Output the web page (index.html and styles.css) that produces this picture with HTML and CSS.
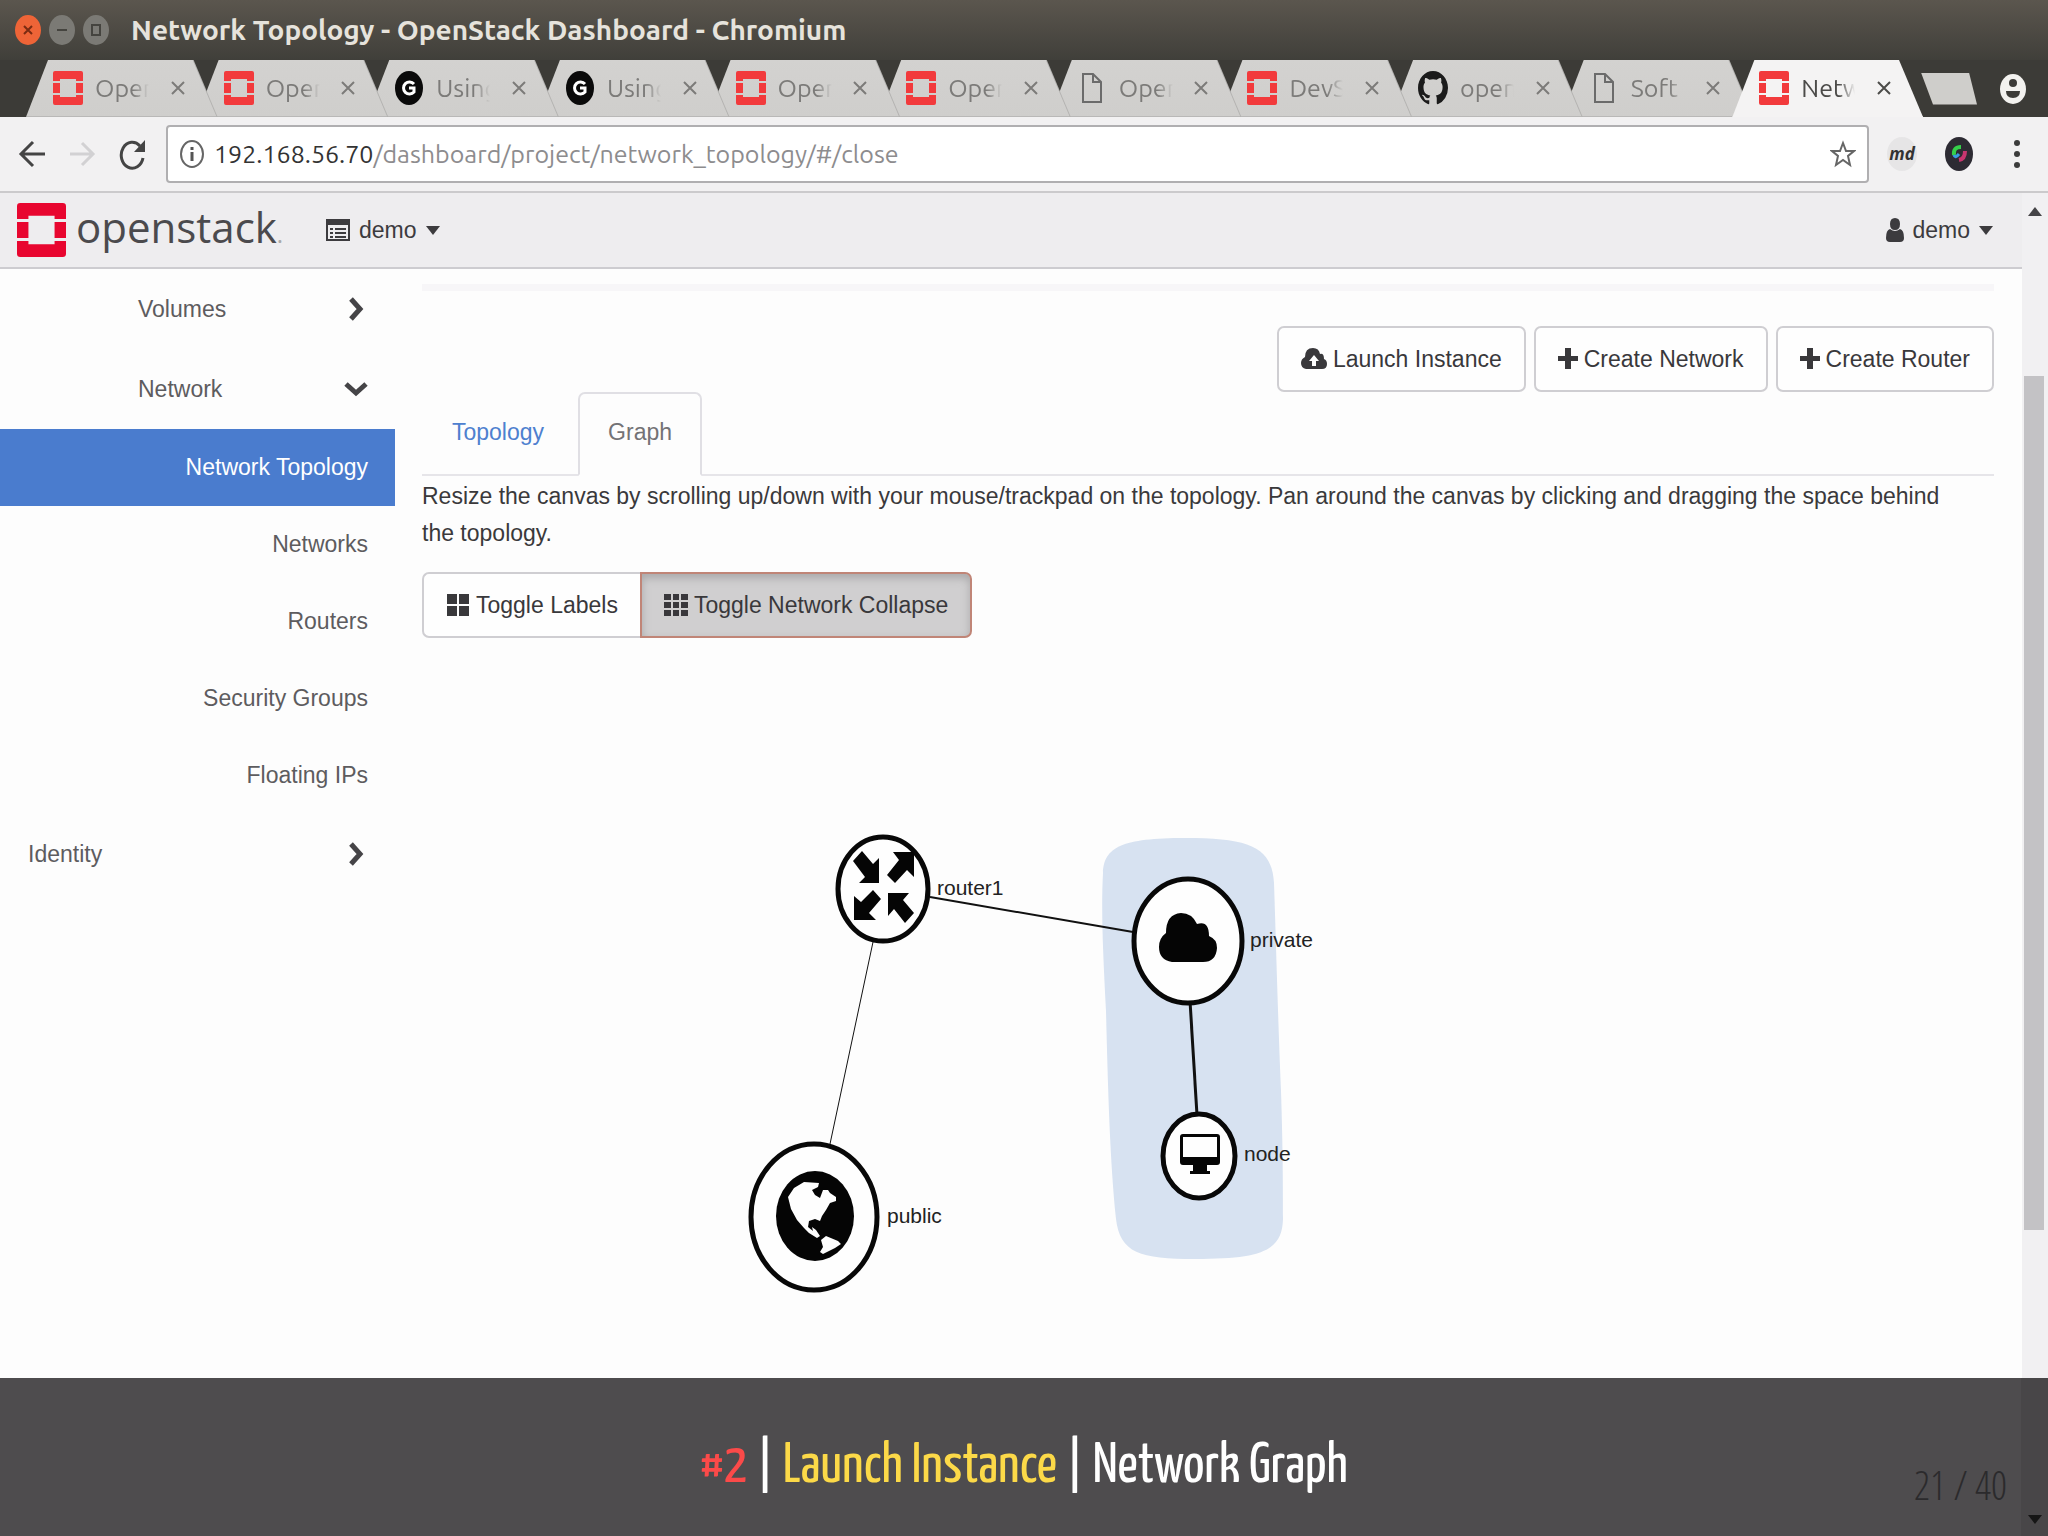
FILE: index.html
```html
<!DOCTYPE html>
<html lang="en">
<head>
<meta charset="utf-8">
<title>Network Topology - OpenStack Dashboard</title>
<link rel="stylesheet" href="styles.css">
</head>
<body>
<svg class="defs" aria-hidden="true">
  <symbol id="stack" viewBox="0 0 30 34" preserveAspectRatio="none">
    <path d="M2 0H28Q30 0 30 2V10H23V8H7V10H0V2Q0 0 2 0ZM0 12H7V22H0ZM23 12H30V22H23ZM0 24H7V26H23V24H30V32Q30 34 28 34H2Q0 34 0 32Z"/>
  </symbol>
  <symbol id="gee" viewBox="0 0 30 34" preserveAspectRatio="none">
    <ellipse cx="15" cy="17" rx="14" ry="17" fill="#0a0a0a"/>
    <path d="M20 13A6 6 0 1 0 20 21V17H15" fill="none" stroke="#fff" stroke-width="3"/>
  </symbol>
  <symbol id="page" viewBox="0 0 30 34" preserveAspectRatio="none">
    <path d="M6 3H16L24 11V31H6ZM16 3V11H24" fill="none" stroke="#6b6b6b" stroke-width="2"/>
  </symbol>
  <symbol id="octocat" viewBox="0 0 16 16" preserveAspectRatio="none">
    <path fill="#1b1b1b" d="M8 0C3.58 0 0 3.58 0 8c0 3.54 2.29 6.53 5.47 7.59.4.07.55-.17.55-.38 0-.19-.01-.82-.01-1.49-2.01.37-2.53-.49-2.69-.94-.09-.23-.48-.94-.82-1.13-.28-.15-.68-.52-.01-.53.63-.01 1.08.58 1.23.82.72 1.21 1.87.87 2.33.66.07-.52.28-.87.51-1.07-1.78-.2-3.64-.89-3.64-3.95 0-.87.31-1.59.82-2.15-.08-.2-.36-1.02.08-2.12 0 0 .67-.21 2.2.82.64-.18 1.32-.27 2-.27s1.36.09 2 .27c1.53-1.04 2.2-.82 2.2-.82.44 1.1.16 1.92.08 2.12.51.56.82 1.27.82 2.15 0 3.07-1.87 3.75-3.65 3.95.29.25.54.73.54 1.48 0 1.07-.01 1.93-.01 2.2 0 .21.15.46.55.38A8.01 8.01 0 0 0 16 8c0-4.42-3.58-8-8-8Z"/>
  </symbol>
  <symbol id="cross" viewBox="0 0 16 18"><path d="M2 3L14 15M14 3L2 15" fill="none" stroke="currentColor" stroke-width="2"/></symbol>
  <symbol id="caret" viewBox="0 0 14 9"><path d="M0 0H14L7 9Z" fill="currentColor"/></symbol>
  <symbol id="plus" viewBox="0 0 20 24"><path d="M7 1H13V9H20V14H13V22H7V14H0V9H7Z" fill="currentColor"/></symbol>
  <symbol id="chev" viewBox="0 0 16 24"><path d="M3 2L12 12L3 22" fill="none" stroke="currentColor" stroke-width="5"/></symbol>
</svg>

<header class="titlebar">
  <div class="controls">
    <button class="ctl ctl-close" aria-label="Close"><svg viewBox="0 0 26 30"><path d="M9 11L17 19M17 11L9 19"/></svg></button>
    <button class="ctl" aria-label="Minimize"><svg viewBox="0 0 26 30"><path d="M8 15H18"/></svg></button>
    <button class="ctl" aria-label="Maximize"><svg viewBox="0 0 26 30"><path d="M9 10H17V20H9Z"/></svg></button>
  </div>
  <span class="window-title">Network Topology - OpenStack Dashboard - Chromium</span>
</header>

<nav class="tabstrip" aria-label="Browser tabs">
  <div class="tabs">
    <div class="tab"><div class="tab-in"><svg class="fav"><use href="#stack"/></svg><span class="tab-t">Open</span><svg class="x"><use href="#cross"/></svg></div></div>
    <div class="tab"><div class="tab-in"><svg class="fav"><use href="#stack"/></svg><span class="tab-t">Open</span><svg class="x"><use href="#cross"/></svg></div></div>
    <div class="tab"><div class="tab-in"><svg class="fav"><use href="#gee"/></svg><span class="tab-t">Using</span><svg class="x"><use href="#cross"/></svg></div></div>
    <div class="tab"><div class="tab-in"><svg class="fav"><use href="#gee"/></svg><span class="tab-t">Using</span><svg class="x"><use href="#cross"/></svg></div></div>
    <div class="tab"><div class="tab-in"><svg class="fav"><use href="#stack"/></svg><span class="tab-t">Open</span><svg class="x"><use href="#cross"/></svg></div></div>
    <div class="tab"><div class="tab-in"><svg class="fav"><use href="#stack"/></svg><span class="tab-t">Open</span><svg class="x"><use href="#cross"/></svg></div></div>
    <div class="tab"><div class="tab-in"><svg class="fav"><use href="#page"/></svg><span class="tab-t">Open</span><svg class="x"><use href="#cross"/></svg></div></div>
    <div class="tab"><div class="tab-in"><svg class="fav"><use href="#stack"/></svg><span class="tab-t">DevS</span><svg class="x"><use href="#cross"/></svg></div></div>
    <div class="tab"><div class="tab-in"><svg class="fav"><use href="#octocat"/></svg><span class="tab-t">open</span><svg class="x"><use href="#cross"/></svg></div></div>
    <div class="tab"><div class="tab-in"><svg class="fav"><use href="#page"/></svg><span class="tab-t">Soft</span><svg class="x"><use href="#cross"/></svg></div></div>
    <div class="tab current"><div class="tab-in"><svg class="fav"><use href="#stack"/></svg><span class="tab-t">Netw</span><svg class="x"><use href="#cross"/></svg></div></div>
  </div>
  <button class="newtab" aria-label="New tab"></button>
  <button class="profile" aria-label="Profile"><svg viewBox="0 0 26 30"><ellipse cx="13" cy="15" rx="13" ry="15" fill="#f3f2ef"/><ellipse cx="13" cy="9" rx="4" ry="4" fill="#3c3b37"/><path d="M6 17H20Q20 24 13 24Q6 24 6 17Z" fill="#3c3b37"/></svg></button>
</nav>

<div class="toolbar">
  <button class="tool" aria-label="Back"><svg viewBox="0 0 28 32"><path d="M27 16H4M15 4L3 16L15 28" fill="none" stroke="#444" stroke-width="3"/></svg></button>
  <button class="tool" aria-label="Forward"><svg viewBox="0 0 28 32"><path d="M2 16H24M14 5L25 16L14 27" fill="none" stroke="#d2d1d3" stroke-width="3"/></svg></button>
  <button class="tool" aria-label="Reload"><svg viewBox="0 0 28 32"><path d="M25 20A11 13 0 1 1 22 8" fill="none" stroke="#444" stroke-width="3"/><path d="M27 2V14H16Z" fill="#444"/></svg></button>
  <div class="address">
    <svg class="info" viewBox="0 0 26 30"><ellipse cx="13" cy="15" rx="11" ry="13" fill="none" stroke="#666" stroke-width="2"/><path d="M13 13V22M13 8V11" stroke="#555" stroke-width="3"/></svg>
    <span class="url"><b>192.168.56.70</b>/dashboard/project/network_topology/#/close</span>
    <svg class="star" viewBox="0 0 26 28"><path d="M13 3L16 11L24 11L18 16L20 25L13 20L6 25L8 16L2 11L10 11Z" fill="none" stroke="#666" stroke-width="2"/></svg>
  </div>
  <span class="md">md</span>
  <svg class="lens" viewBox="0 0 28 34"><ellipse cx="14" cy="17" rx="14" ry="17" fill="#2d2b33"/><path d="M9 18Q8 10 16 10" fill="none" stroke="#35d04a" stroke-width="4"/><path d="M9 18Q10 22 14 17" fill="none" stroke="#3a9be0" stroke-width="3"/><path d="M20 14Q20 22 14 23" fill="none" stroke="#c8356f" stroke-width="4"/></svg>
  <button class="menu" aria-label="Menu"><svg viewBox="0 0 8 30"><circle cx="4" cy="4" r="3"/><circle cx="4" cy="15" r="3"/><circle cx="4" cy="26" r="3"/></svg></button>
</div>

<div class="viewport">
  <div class="site">
    <header class="site-head">
      <a class="brand" href="#"><svg class="brand-mark"><use href="#stack"/></svg><span>openstack<small>.</small></span></a>
      <button class="drop"><svg class="i-list" viewBox="0 0 24 22"><path d="M1 1H23V21H1Z" fill="none" stroke="currentColor" stroke-width="2"/><path d="M0 0H24V6H0ZM4 9H7V11H4ZM9 9H20V11H9ZM4 13H7V15H4ZM9 13H20V15H9ZM4 17H7V19H4ZM9 17H20V19H9Z" fill="currentColor"/></svg>demo<svg class="caret"><use href="#caret"/></svg></button>
      <button class="drop user"><svg class="i-user" viewBox="0 0 18 24"><path d="M9 0Q14 0 14 6Q14 12 9 12Q4 12 4 6Q4 0 9 0ZM4 11Q9 15 14 11Q18 12 18 20Q18 24 14 24H4Q0 24 0 20Q0 12 4 11Z" fill="currentColor"/></svg>demo<svg class="caret"><use href="#caret"/></svg></button>
    </header>
    <div class="columns">
      <nav class="sidebar" aria-label="Project">
        <a class="group sub" href="#"><span>Volumes</span><svg class="chev"><use href="#chev"/></svg></a>
        <a class="group sub" href="#"><span>Network</span><svg class="chev open"><use href="#chev"/></svg></a>
        <a class="leaf here" href="#">Network Topology</a>
        <a class="leaf" href="#">Networks</a>
        <a class="leaf" href="#">Routers</a>
        <a class="leaf" href="#">Security Groups</a>
        <a class="leaf" href="#">Floating IPs</a>
        <a class="group" href="#"><span>Identity</span><svg class="chev"><use href="#chev"/></svg></a>
      </nav>
      <main class="content">
        <hr class="rule">
        <div class="actions">
          <button class="btn"><svg class="i-up" viewBox="0 0 26 24"><path d="M5 22Q0 21 0 16Q0 12 4 10Q4 1 12 1Q18 1 19 7Q23 6 23 12Q26 13 26 17Q26 22 21 22ZM13 8L8 14H11V19H15V14H18Z" fill="currentColor" fill-rule="evenodd"/></svg>Launch Instance</button>
          <button class="btn"><svg class="i-plus"><use href="#plus"/></svg>Create Network</button>
          <button class="btn"><svg class="i-plus"><use href="#plus"/></svg>Create Router</button>
        </div>
        <div class="pills">
          <a class="pill" href="#">Topology</a>
          <a class="pill on" href="#">Graph</a>
        </div>
        <p class="help">Resize the canvas by scrolling up/down with your mouse/trackpad on the topology. Pan around the canvas by clicking and dragging the space behind the topology.</p>
        <div class="toggles">
          <button class="btn"><svg class="i-grid" viewBox="0 0 22 22"><path d="M0 0H10V10H0ZM12 0H22V10H12ZM0 12H10V22H0ZM12 12H22V22H12Z" fill="currentColor"/></svg>Toggle Labels</button>
          <button class="btn pressed"><svg class="i-grid" viewBox="0 0 24 22"><path d="M0 0H7V6H0ZM9 0H15V6H9ZM17 0H24V6H17ZM0 8H7V14H0ZM9 8H15V14H9ZM17 8H24V14H17ZM0 16H7V22H0ZM9 16H15V22H9ZM17 16H24V22H17Z" fill="currentColor"/></svg>Toggle Network Collapse</button>
        </div>
        <svg class="graph" viewBox="422 637 1572 740" role="img" aria-label="Network graph">
          <path class="hull" d="M1103 872C1104 846 1122 837 1185 837C1250 837 1272 846 1274 882C1276 940 1278 1020 1281 1090C1283 1150 1283 1190 1283 1218C1282 1250 1262 1258 1195 1258C1140 1258 1120 1252 1116 1218C1110 1160 1108 1090 1106 1010C1103 950 1101 910 1103 872Z"/>
          <path d="M930 896L1133 931" stroke-width="2"/>
          <path d="M873 941L830 1143" stroke-width="1"/>
          <path d="M1190 1000L1197 1114" stroke-width="3"/>
          <g class="ring"><ellipse cx="883" cy="888" rx="45" ry="52"/><ellipse cx="1188" cy="940" rx="54" ry="62"/><ellipse cx="1199" cy="1155" rx="36" ry="42"/><ellipse cx="814" cy="1216" rx="63" ry="73"/></g>
          <g class="glyph">
            <path d="M853 860L862 850L873 863L879 857V882H859L865 876Z"/>
            <path d="M893 851H914V876L907 869L895 882L887 874L899 859Z"/>
            <path d="M873 889L881 898L869 912L876 919H854V895L861 901Z"/>
            <path d="M888 892H909L903 899L914 912L905 922L894 908L888 915Z"/>
            <path d="M1172 961Q1159 959 1159 946Q1159 937 1166 932Q1166 913 1181 912Q1192 912 1197 923Q1209 919 1209 935Q1217 938 1217 947Q1216 961 1203 961Z"/>
            <path fill-rule="evenodd" d="M1183 1133H1217Q1220 1133 1220 1136V1161Q1220 1164 1217 1164H1207V1170H1210V1173H1190V1170H1193V1164H1183Q1180 1164 1180 1161V1136Q1180 1133 1183 1133ZM1183 1136V1156H1217V1136Z"/>
            <ellipse cx="815" cy="1215" rx="39" ry="45"/>
          </g>
          <path class="land" d="M788 1196L794 1187L804 1181L819 1182L818 1186L812 1189L815 1194L820 1197L823 1189L828 1189L830 1192L836 1196L836 1200L830 1202L826 1209L822 1215L820 1220L815 1218L809 1220L808 1226L813 1230L812 1226L816 1229L820 1235L817 1237L809 1232L804 1227L797 1219L791 1208ZM821 1239L826 1235L838 1240L841 1243L835 1247L831 1249L823 1253L820 1251L823 1246Z"/>
          <g class="tags"><text x="937" y="894">router1</text><text x="1250" y="946">private</text><text x="1244" y="1160">node</text><text x="887" y="1222">public</text></g>
        </svg>
      </main>
    </div>
  </div>
  <div class="scroll" aria-hidden="true"><svg class="up" viewBox="0 0 14 9"><path d="M0 9L7 0L14 9Z"/></svg><div class="thumb"></div></div>
</div>

<footer class="caption">
  <h1><span class="num">#2</span> | <span class="step">Launch Instance</span> | Network Graph</h1>
  <span class="count">21 / 40</span>
  <svg class="down" viewBox="0 0 14 9"><path d="M0 0H14L7 9Z"/></svg>
</footer>
</body>
</html>
```
FILE: styles.css
```css
* { box-sizing: border-box; }
html, body { height: 100%; }
body {
  margin: 0;
  position: relative;
  display: flex;
  flex-direction: column;
  overflow: hidden;
  background: #fdfdfd;
  color: #3a393b;
  font: 23px/37px "Liberation Sans", Arial, sans-serif;
}
button { font: inherit; color: inherit; border: 0; padding: 0; background: none; }
a { color: inherit; text-decoration: none; }
svg { display: block; flex: none; }
.defs { position: absolute; width: 0; height: 0; }

.titlebar {
  height: 60px;
  flex: none;
  display: flex;
  align-items: center;
  gap: 22px;
  padding-left: 15px;
  background: linear-gradient(#5b564e, #403f3a);
  color: #e6e3dc;
}
.window-title { font: bold 28px/30px Ubuntu, "Open Sans", sans-serif; }
.controls { display: flex; gap: 8px; }
.ctl { width: 26px; height: 30px; border-radius: 50%; background: #7b7a75; }
.ctl svg { width: 26px; height: 30px; fill: none; stroke: #45443f; stroke-width: 2; }
.ctl-close { background: #ee6437; }
.ctl-close svg { stroke: #7a2b12; }

.tabstrip {
  height: 57px;
  flex: none;
  display: flex;
  align-items: center;
  padding: 0 22px 0 26px;
  background: #3c3b37;
}
.tabs { flex: 1; min-width: 0; display: grid; grid-template-columns: repeat(11, minmax(0, 1fr)); }
.tab { position: relative; height: 57px; margin-right: -20px; filter: drop-shadow(1px 0 0 #b3b2b0); color: #7c7b79; }
.tab:nth-child(1) { z-index: 10; }
.tab:nth-child(2) { z-index: 9; }
.tab:nth-child(3) { z-index: 8; }
.tab:nth-child(4) { z-index: 7; }
.tab:nth-child(5) { z-index: 6; }
.tab:nth-child(6) { z-index: 5; }
.tab:nth-child(7) { z-index: 4; }
.tab:nth-child(8) { z-index: 3; }
.tab:nth-child(9) { z-index: 2; }
.tab:nth-child(10) { z-index: 1; }
.tab-in {
  height: 57px;
  display: flex;
  align-items: center;
  padding: 0 31px 0 27px;
  background: linear-gradient(#d3d2d0, #cfcecc);
  border-bottom: 1px solid #b9b8b7;
  clip-path: polygon(22px 0, calc(100% - 24px) 0, 100% 100%, 0 100%);
}
.tab.current { z-index: 11; color: #4c4b49; filter: none; }
.current .tab-in { background: #f4f3f3; border-color: #f4f3f3; }
.fav { width: 30px; height: 34px; fill: #f23a3c; }
.tab-t {
  flex: 1;
  min-width: 0;
  margin-left: 12px;
  white-space: nowrap;
  font: 25px/34px Ubuntu, "Open Sans", sans-serif;
  -webkit-mask-image: linear-gradient(90deg, #000 38px, transparent 54px);
  mask-image: linear-gradient(90deg, #000 38px, transparent 54px);
}
.x { width: 16px; height: 18px; }
.newtab {
  width: 56px;
  height: 32px;
  margin-left: 18px;
  background: #cfcecb;
  clip-path: polygon(0 0, 48px 0, 100% 100%, 12px 100%);
}
.profile { margin-left: 23px; width: 26px; height: 30px; }
.profile svg { width: 26px; height: 30px; }

.toolbar {
  height: 76px;
  flex: none;
  display: flex;
  align-items: center;
  padding: 0 27px 0 18px;
  background: #f2f1f2;
  border-bottom: 2px solid #cbcacc;
}
.tool { width: 28px; height: 32px; margin-right: 22px; }
.tool svg { width: 28px; height: 32px; }
.address {
  flex: 1;
  height: 58px;
  margin-left: -2px;
  display: flex;
  align-items: center;
  padding: 0 11px;
  border: 2px solid #b0afb1;
  border-radius: 4px;
  background: #fff;
}
.info { width: 26px; height: 30px; }
.url { flex: 1; margin-left: 9px; font: 25px/34px Ubuntu, "Open Sans", sans-serif; color: #8d8c8e; }
.url b { font-weight: 400; color: #333; }
.star { width: 26px; height: 30px; }
.md { width: 30px; margin-left: 18px; border-radius: 50%; background: #e6e5e6; font: italic bold 17px/34px "Open Sans", sans-serif; text-align: center; color: #333; }
.lens { width: 28px; height: 34px; margin-left: 28px; }
.menu { width: 8px; height: 30px; margin-left: 40px; }
.menu svg { width: 8px; height: 30px; fill: #3c3c3c; }

.viewport { flex: 1; min-height: 0; display: flex; }
.site { flex: 1; min-width: 0; }
.site-head {
  height: 76px;
  display: flex;
  align-items: center;
  padding: 0 29px 0 17px;
  background: #eeedef;
  border-bottom: 2px solid #cdccd0;
}
.brand { width: 309px; display: flex; align-items: center; gap: 10px; color: #4b4a4d; font: 42px/54px "Open Sans", sans-serif; }
.brand small { font-size: 24px; color: #aaa; }
.brand-mark { width: 49px; height: 54px; fill: #e8062f; }
.drop { display: flex; align-items: center; color: #3c3b3e; }
.user { margin-left: auto; }
.i-list { width: 24px; height: 22px; margin-right: 9px; }
.i-user { width: 18px; height: 24px; margin-right: 8px; }
.caret { width: 14px; height: 9px; margin-left: 9px; }

.columns { display: flex; }
.sidebar { width: 395px; flex: none; display: flex; flex-direction: column; color: #5d5c5f; }
.group { height: 80px; display: flex; align-items: center; justify-content: space-between; padding: 0 31px 0 28px; }
.sub { padding-left: 138px; }
.chev { width: 16px; height: 24px; color: #454447; }
.open { transform: rotate(90deg); }
.leaf { height: 77px; display: flex; align-items: center; justify-content: flex-end; padding-right: 27px; }
.here { background: #4a7cce; color: #fff; }

.content { flex: 1; min-width: 0; padding: 15px 28px 0 27px; }
.rule { height: 7px; margin: 0; border: 0; background: #f7f6f8; }
.actions { display: flex; justify-content: flex-end; gap: 8px; margin-top: 35px; }
.btn {
  height: 66px;
  display: flex;
  align-items: center;
  gap: 6px;
  padding: 0 22px;
  border: 2px solid #cfced2;
  border-radius: 7px;
  background: #fefefe;
  color: #39383b;
}
.i-up { width: 26px; height: 24px; }
.i-plus { width: 20px; height: 24px; }
.i-grid { width: 24px; height: 22px; }
.pills { display: flex; gap: 4px; border-bottom: 2px solid #e6e5e9; }
.pill { height: 84px; margin-bottom: -2px; padding: 20px 28px 0; border: 2px solid transparent; color: #4e80cf; }
.pill.on { border-color: #e0dfe4; border-bottom-color: #fdfdfd; border-radius: 7px 7px 0 0; color: #737275; }
.help { margin: 2px 0 20px; padding-right: 24px; }
.toggles { display: flex; }
.toggles .btn:first-child { border-radius: 7px 0 0 7px; border-right: 0; }
.toggles .pressed { border-color: #c08577; border-radius: 0 7px 7px 0; background: #d0cfd0; box-shadow: inset 0 4px 8px #a9a8a9; }

.graph { width: 100%; height: auto; stroke: #111; }
.hull { fill: #d7e2f1; stroke: none; }
.ring { fill: #fefefe; stroke: #080808; stroke-width: 5px; }
.glyph { fill: #050505; stroke: none; }
.land { fill: #fefefe; stroke: none; }
.tags { fill: #222; stroke: none; font-size: 21px; }

.scroll { width: 26px; padding: 14px 4px 0 2px; background: #f1f0f2; }
.up { width: 14px; height: 9px; margin-left: 4px; fill: #454447; }
.thumb { height: 854px; margin-top: 160px; background: #c3c2c5; }

.caption {
  position: absolute;
  left: 0;
  right: 0;
  bottom: 0;
  height: 158px;
  display: flex;
  align-items: center;
  justify-content: center;
  background: linear-gradient(90deg, #4e4c4e calc(100% - 27px), #484648 0);
  color: #fff;
}
.caption h1 { margin: 0; padding-top: 20px; font: 400 56px/60px "Yanone Kaffeesatz", "Open Sans", sans-serif; }
.num { color: #fb4a49; }
.step { color: #fcd948; }
.count { position: absolute; right: 41px; bottom: 29px; font: 300 40px/44px "Open Sans Condensed Light", "Yanone Kaffeesatz", "Open Sans", sans-serif; color: #2b2a2c; }
.down { position: absolute; right: 6px; bottom: 12px; width: 14px; height: 9px; fill: #161616; }
```
